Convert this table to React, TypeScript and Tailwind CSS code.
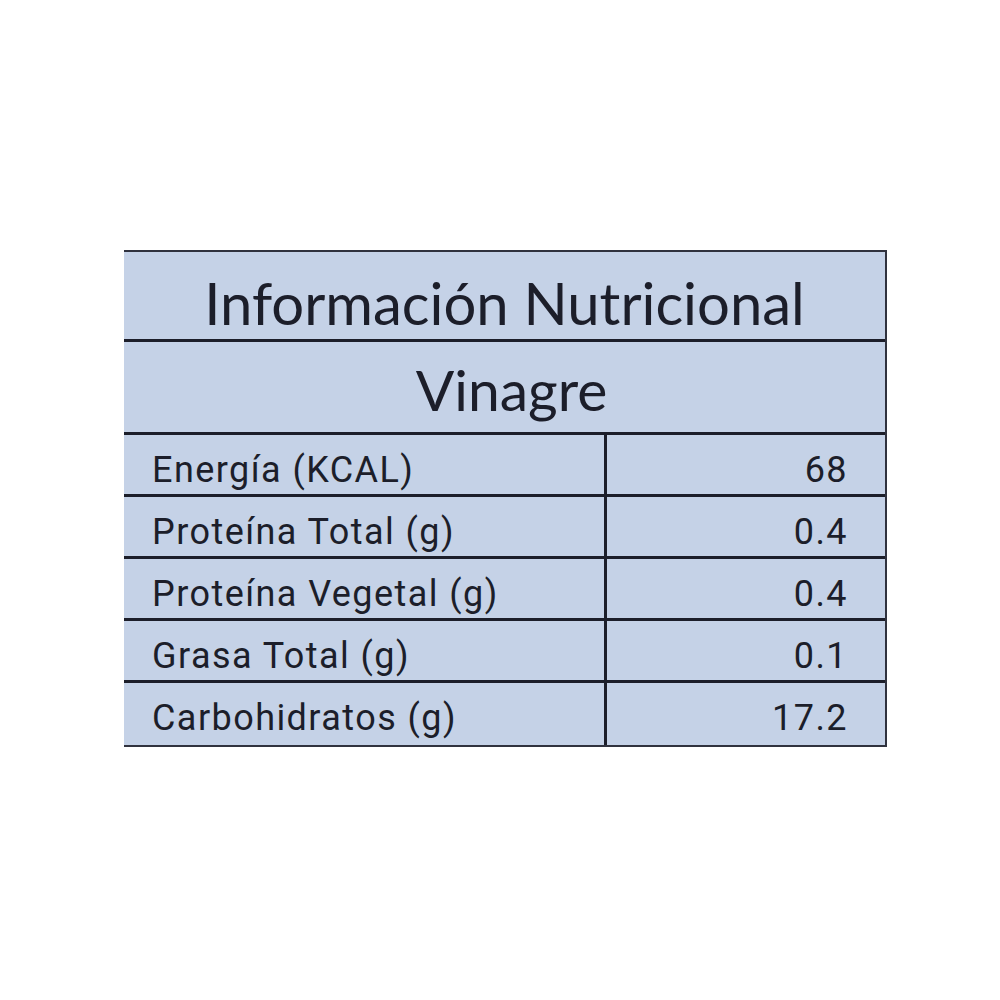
import React from "react";

const rows: [string, string][] = [
  ["Energía (KCAL)", "68"],
  ["Proteína Total (g)", "0.4"],
  ["Proteína Vegetal (g)", "0.4"],
  ["Grasa Total (g)", "0.1"],
  ["Carbohidratos (g)", "17.2"],
];

export default function App() {
  return (
    <div className="w-[1000px] h-[1000px] bg-white pt-[250px] pl-[124px]">
      <div className="w-[763px] bg-[#c5d2e7] border-t-2 border-r-2 border-b-2 border-[#30323e] text-[#1c1e2a]">
        <div
          className="h-[90px] border-b-[3px] border-[#1c1e2a] flex items-center justify-center pt-[14px] text-[58px]"
          style={{ fontFamily: "Lato, sans-serif" }}
        >
          Información Nutricional
        </div>
        <div
          className="h-[93px] border-b-[3px] border-[#1c1e2a] flex items-center justify-center pt-[6px] pl-[14px] text-[57px]"
          style={{ fontFamily: "Lato, sans-serif" }}
        >
          Vinagre
        </div>
        {rows.map(([label, value], i) => (
          <div
            key={label}
            className={`grid grid-cols-[483px_1fr] h-[62px] ${i < rows.length - 1 ? "border-b-[3px] border-[#1c1e2a]" : ""}`}
            style={{ fontFamily: "Roboto, sans-serif" }}
          >
            <div className="border-r-[3px] border-[#1c1e2a] flex items-center pl-[28px] pt-[8px] text-[36px] tracking-[0.04em]">
              {label}
            </div>
            <div className="flex items-center justify-end pr-[37px] pt-[8px] text-[36px] tracking-[0.04em]">
              {value}
            </div>
          </div>
        ))}
      </div>
    </div>
  );
}
